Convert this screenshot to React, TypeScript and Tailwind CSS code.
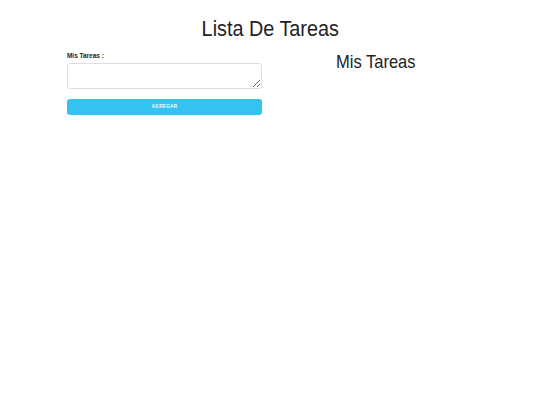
export default function App() {
  return (
    <div className="w-[540px] h-[405px] bg-white text-[#222]" style={{ fontFamily: '"Liberation Sans", Arial, Helvetica, sans-serif' }}>
      <div className="pt-[18px] flex justify-center">
        <h1 className="text-[22px] leading-none font-normal scale-x-[0.9] whitespace-nowrap">Lista De Tareas</h1>
      </div>
      <div className="mx-auto w-[406px] grid grid-cols-2 gap-4 mt-[10px]">
        <div className="flex flex-col">
          <label className="text-[7.5px] leading-none font-bold origin-left scale-x-[0.86] whitespace-nowrap mt-[1.5px]">Mis Tareas :</label>
          <textarea className="mt-[3.5px] h-[26.5px] border border-[#dedede] rounded-[3px] resize-y bg-white" />
          <button className="mt-[9.5px] h-[16.5px] bg-[#33c3f0] rounded-[3px] text-white flex items-center justify-center">
            <span className="text-[5px] leading-none font-bold tracking-[0.1em] scale-x-[0.88] whitespace-nowrap">AGREGAR</span>
          </button>
        </div>
        <div className="flex justify-center">
          <h2 className="text-[19px] leading-none mt-[2px] scale-x-[0.87] whitespace-nowrap">Mis Tareas</h2>
        </div>
      </div>
    </div>
  );
}
